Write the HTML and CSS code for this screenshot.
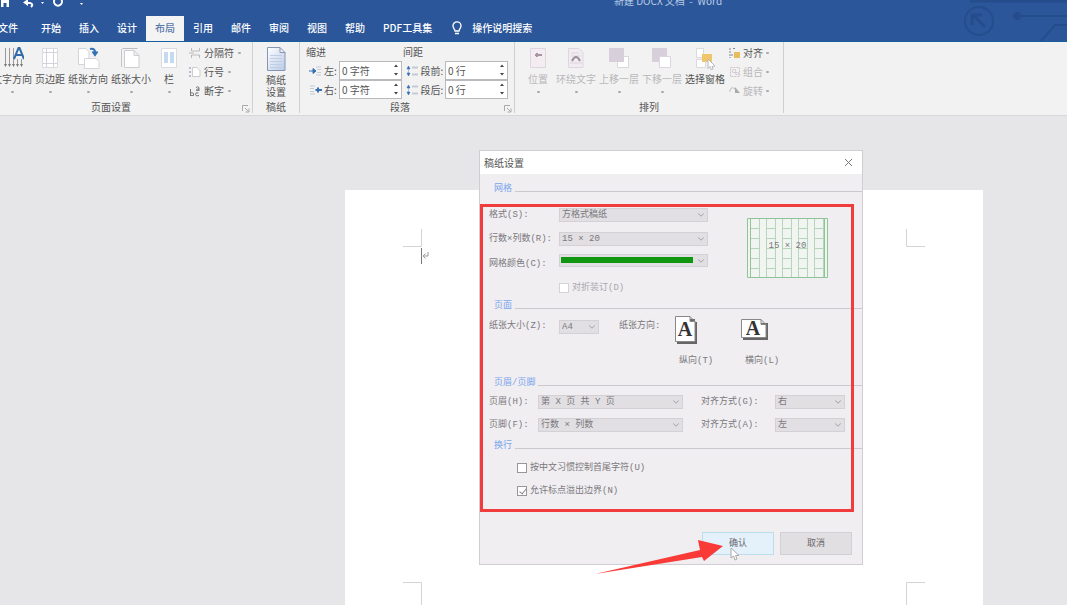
FILE: index.html
```html
<!DOCTYPE html>
<html lang="zh-CN">
<head>
<meta charset="utf-8">
<title>新建 DOCX 文档 - Word</title>
<link rel="stylesheet" href="styles.css">
</head>
<body>
<svg class="defs" aria-hidden="true">
  <symbol id="chev" viewBox="0 0 8 6"><path d="M1.200 1.500 4 4.200 6.800 1.500" fill="none" stroke="#a3a1a5"/></symbol>
  <symbol id="launch" viewBox="0 0 8 8"><path d="M.5 6V.5H6M3 3l3.500 3.500M7 3.500V7H3.500" fill="none" stroke="#aaa"/></symbol>
  <symbol id="spin" viewBox="0 0 6 18"><path d="M1 6 3 3.500 5 6zM1 12 3 14.500 5 12z" fill="#444"/></symbol>
  <symbol id="lines" viewBox="0 0 13 12"><path d="M2.500 2v8" stroke="#a9c2e2"/><path d="M1 4 2.500 1 4 4zM1 8l1.500 3L4 8z" fill="#3c6fb3" stroke="#3c6fb3" stroke-width=".6"/><path d="M6 2.500h6M6 9.500h6" stroke="#c3cad6" stroke-width="2"/></symbol>
</svg>

<header class="top">
  <svg class="circuit" viewBox="0 0 110 41" aria-hidden="true"><g fill="none" stroke="#254c8b"><path d="M13 1h97" stroke-width="3"/><circle cx="22" cy="21" r="14" stroke-width="2"/><path d="M28 27 16 15M15 25V15h10" stroke-width="3"/><path d="M64 16h46M84 41l14-16h12" stroke-width="2"/></g><circle cx="60" cy="16" r="4" fill="#254c8b"/></svg>
  <div class="titlebar">
    <svg class="quick" viewBox="0 0 90 15" aria-hidden="true"><path d="M1 0h8v7H1z" fill="#fff"/><path d="M3.500 3h3v4h-3z" fill="#2b579a"/><path d="M25 3h5q4 1 1 4" fill="none" stroke="#fff" stroke-width="2"/><path d="M28-1v7l-5-3.500z" fill="#fff"/><path d="M41 2h3l-1.500 2zM80 3h3l-1.500 2z" fill="#fff"/><path d="M55-1a4 4 0 1 0 6 0" fill="none" stroke="#fff" stroke-width="2"/></svg>
    <span class="doc-name">新建 DOCX 文档 &nbsp;-&nbsp; Word</span>
  </div>
  <nav class="tabs">
    <button class="tab file">文件</button><button class="tab">开始</button><button class="tab">插入</button><button class="tab">设计</button><button class="tab active">布局</button><button class="tab">引用</button><button class="tab">邮件</button><button class="tab">审阅</button><button class="tab">视图</button><button class="tab">帮助</button><button class="tab">PDF工具集</button>
    <button class="tab tell"><svg width="12" height="14" viewBox="0 0 12 14"><path d="M4 10C4 8 2 7.500 2 4.800a4 4 0 0 1 8 0C10 7.500 8 8 8 10zM4 12.500h4" fill="none" stroke="#fff" stroke-width="1.300"/></svg>操作说明搜索</button>
  </nav>
</header>

<section class="ribbon">
  <div class="group setup">
    <div class="tools">
      <button class="big"><svg viewBox="0 0 24 24"><path d="M5.500 2v17M9.500 2v17M13.500 2v17M17.500 13v6M21.500 13v6" stroke="#999"/><path d="m4 18 1.500 3L7 18zm4 0 1.500 3 1.500-3zm4 0 1.500 3 1.500-3zm4 0 1.500 3 1.500-3zm4 0 1.500 3 1.500-3z" fill="#777"/><path d="M14 13 18.500 2h1L24 13M15.500 9h7" fill="none" stroke="#336ba9" stroke-width="2"/></svg>文字方向<i class="dot"></i></button>
      <button class="big"><svg viewBox="0 0 24 24"><path d="M4.500 2.500h15v19h-15z" fill="#fff" stroke="#dadae0"/><path d="M8.500 3v18M15.500 3v18M5 6.500h14M5 17.500h14" stroke="#d0d3dc"/></svg>页边距<i class="dot"></i></button>
      <button class="big"><svg viewBox="0 0 24 24"><path d="M2.500 2.500H10l3 3v13H2.500z" fill="#fff" stroke="#d4d4da"/><path d="M8.500 12.500H20l3 3v7H8.500z" fill="#fff" stroke="#d4d4da"/><path d="M14 3q6-1 5 5M16.500 5.500 19 9l2.500-3.500" fill="none" stroke="#3670b5" stroke-width="2"/></svg>纸张方向<i class="dot"></i></button>
      <button class="big"><svg viewBox="0 0 24 24"><path d="M3.500 2.500h15" stroke="#bbbbc4"/><path d="M2.500 3v18" stroke="#c5c5cc"/><path d="M5.500 4.500H15l5 5v12H5.500zM15 4.500v5h5" fill="#fff" stroke="#ccccd2"/></svg>纸张大小<i class="dot"></i></button>
      <button class="big"><svg viewBox="0 0 24 24"><path d="M4.500 2.500h15v19h-15z" fill="#fff" stroke="#dadae0"/><path d="M7 6h4v11H7zM13 6h4v11h-4z" fill="#c4daf0"/></svg>栏<i class="dot"></i></button>
      <div class="stack">
        <button class="small"><svg viewBox="0 0 12 12"><path d="M2.500 1v3h8V1M2.500 11V8h8v3M0 6h5" fill="none" stroke="#bbb"/></svg>分隔符<i class="dot"></i></button>
        <button class="small"><svg viewBox="0 0 12 12"><path d="M1 1v10" stroke="#7a8ca6" stroke-dasharray="2 2"/><path d="M3.500 1.500H8l3 3v6H3.500z" fill="#fff" stroke="#ccc"/></svg>行号<i class="dot"></i></button>
        <button class="small"><svg viewBox="0 0 12 12"><path d="M1.500 4v7M1.500 8q4-1 3 2.500h-3M9.500 8Q6 7 6.500 9.500 7 12 10 10.500M7 2.500q2-1.500 3 0V6M10 4Q7 3.500 7.500 5.500 9 6 10 5" fill="none" stroke="#777"/></svg>断字<i class="dot"></i></button>
      </div>
    </div>
    <div class="caption">页面设置</div><svg class="launcher"><use href="#launch"/></svg>
  </div>
  <div class="group draft">
    <div class="tools"><button class="big two"><svg viewBox="0 0 24 26"><defs><linearGradient id="pg" x2="1" y2="1"><stop stop-color="#fff"/><stop offset="1" stop-color="#b9c9e5"/></linearGradient></defs><path d="M3.500 1.500H16l5 5v18H3.500zM16 1.500v5h5" fill="url(#pg)" stroke="#8796b5"/><path d="M6 9.500h12M6 12.500h12M6 15.500h12M6 18.500h12M6 21.500h12" stroke="#bfcee7"/></svg>稿纸<br>设置</button></div>
    <div class="caption">稿纸</div>
  </div>
  <div class="group para">
    <div class="spacing">
      <span class="head">缩进</span><span class="head">间距</span>
      <label class="field"><svg viewBox="0 0 13 12"><path d="M0 6h5M4 3.500 7 6 4 8.500z" fill="#3670b5" stroke="#3670b5"/><path d="M7 2h5M8 4.500h4M8 7.500h4M7 10h5" stroke="#c3cad6"/></svg><span>左:</span><span class="num"><input value="0 字符"><svg><use href="#spin"/></svg></span></label>
      <label class="field"><svg viewBox="0 0 13 12"><use href="#lines"/></svg><span>段前:</span><span class="num"><input value="0 行"><svg><use href="#spin"/></svg></span></label>
      <label class="field"><svg viewBox="0 0 13 12"><path d="M1 2h5M1 4.500h4M1 7.500h4M1 10h5" stroke="#c3cad6"/><path d="M13 6H9M9 3.500v5M6.500 6h5" fill="none" stroke="#3670b5" stroke-width="2"/></svg><span>右:</span><span class="num"><input value="0 字符"><svg><use href="#spin"/></svg></span></label>
      <label class="field"><svg viewBox="0 0 13 12"><use href="#lines"/></svg><span>段后:</span><span class="num"><input value="0 行"><svg><use href="#spin"/></svg></span></label>
    </div>
    <div class="caption">段落</div><svg class="launcher"><use href="#launch"/></svg>
  </div>
  <div class="group arrange">
    <div class="tools">
      <button class="big" disabled><svg viewBox="0 0 24 24"><path d="M4.500 2.500h15v19h-15z" fill="#f3ecf1" stroke="#dfd6dd"/><path d="M9 9h7M11 7v4" stroke="#a793a2" stroke-width="2"/></svg>位置<i class="dot"></i></button>
      <button class="big" disabled><svg viewBox="0 0 24 24"><path d="M4.500 2.500H15l4 4v15H4.500z" fill="#f1ecf1" stroke="#dfd6dd"/><path d="M7 10h10M7 7h8M6 17h12" stroke="#ded4dd"/><path d="M8 15q4-8 8 0" fill="none" stroke="#9a8e9a" stroke-width="2"/></svg>环绕文字<i class="dot"></i></button>
      <button class="big" disabled><svg viewBox="0 0 24 24"><path d="M10.500 10.500h11v11h-11z" fill="#fff" stroke="#ddd5dd"/><path d="M2 2h15v14H2z" fill="#d7cfd9"/></svg>上移一层<i class="dot"></i></button>
      <button class="big" disabled><svg viewBox="0 0 24 24"><path d="M2 2h15v14H2z" fill="#d7cfd9"/><path d="M9.500 10.500h11v11h-11z" fill="#fff" stroke="#ddd5dd"/></svg>下移一层<i class="dot"></i></button>
      <button class="big"><svg viewBox="0 0 24 24"><path d="M3.500 2.500h7v9h-7zM3.500 13.500h9v8h-9z" fill="#fff" stroke="#d9d9df"/><path d="M9 8h10v8H9z" fill="#efc66a"/><path d="m15 13 7 7-3 .5 1 2.500-2 .5-1-3-2 2z" fill="#fff" stroke="#b8b8be"/></svg>选择窗格</button>
      <div class="stack">
        <button class="small"><svg viewBox="0 0 12 12"><path d="M1 1v10M4 1.500h3M4 8H1" stroke="#7b8797" stroke-dasharray="2 1"/><path d="M5 5h6v6H5z" fill="#e8bd5e"/></svg>对齐<i class="dot"></i></button>
        <button class="small" disabled><svg viewBox="0 0 12 12"><path d="M1.500 1.500h9v9h-9zM3.500 3.500h3v3h-3zM6.500 6.500h3v2h-3z" fill="none" stroke="#cdc4cb" stroke-dasharray="2 1"/></svg>组合<i class="dot"></i></button>
        <button class="small" disabled><svg viewBox="0 0 12 12"><path d="M1 7V5q2-4 5-1" fill="none" stroke="#bbb"/><path d="M6 2v6h5z" fill="#aaa"/></svg>旋转<i class="dot"></i></button>
      </div>
    </div>
    <div class="caption">排列</div>
  </div>
</section>

<main class="workspace">
  <article class="sheet">
    <svg class="crop" viewBox="0 0 19 36"><path d="M18.500 0v17.500H0" fill="none" stroke="#d4d4d6"/><path d="M18.500 19v16" stroke="#777"/></svg>
    <svg class="crop right" viewBox="0 0 19 36"><path d="M.5 0v17.500H19" fill="none" stroke="#d4d4d6"/></svg>
    <svg class="crop low" viewBox="0 0 19 36"><path d="M0 .5h18.500V36" fill="none" stroke="#d4d4d6"/></svg>
    <svg class="crop right low" viewBox="0 0 19 36"><path d="M19 .5H.5V36" fill="none" stroke="#d4d4d6"/></svg>
    <svg class="mark" viewBox="0 0 7 8"><path d="M6 1v4H1M3.500 2.500 1 5l2.500 2.500" fill="none" stroke="#999"/></svg>
  </article>
</main>

<section class="dialog" role="dialog" aria-labelledby="dlg-title">
  <div class="dialog-title"><h1 id="dlg-title">稿纸设置</h1><button class="close" aria-label="关闭"><svg viewBox="0 0 9 9"><path d="m1 1 7 7M8 1 1 8" stroke="#777"/></svg></button></div>
  <form>
    <h2>网格</h2>
    <div class="grid-part">
      <div class="grid-fields">
        <label for="fmt">格式(S):</label><span class="sel"><select id="fmt"><option>方格式稿纸</option></select><svg><use href="#chev"/></svg></span>
        <label for="rc">行数×列数(R):</label><span class="sel"><select id="rc"><option>15 × 20</option></select><svg><use href="#chev"/></svg></span>
        <label for="col">网格颜色(C):</label><span class="sel color"><select id="col"><option></option></select><svg><use href="#chev"/></svg></span>
        <label class="check faint"><input type="checkbox" disabled><span>对折装订(D)</span></label>
      </div>
      <div class="preview">
        <svg viewBox="0 0 81 60"><defs><pattern id="cells" width="16" height="10" patternUnits="userSpaceOnUse" x="3"><path d="M.5 0v10M9.500 0v10M.5 .5h9" fill="none" stroke="#b8d4bb"/></pattern></defs><path d="M.5.5h80v59H.5z" fill="#f1f5f1"/><path d="M3 1h75v58H3z" fill="url(#cells)"/><path d="M.5.5h80v59H.5zM3.500 1v58M77.500 1v58" fill="none" stroke="#8fc596"/></svg>
        <span>15 × 20</span>
      </div>
    </div>
    <h2>页面</h2>
    <div class="page-part">
      <label for="size">纸张大小(Z):</label><span class="sel"><select id="size"><option>A4</option></select><svg><use href="#chev"/></svg></span>
      <span class="orient-label">纸张方向:</span>
      <button type="button" class="orient"><svg viewBox="0 0 28 28"><path d="M2 3h20v25H2z" fill="#666"/><path d="M20 0h3v6h-3z" fill="#f0eef1"/><path d="M.5.5H15l5 5v20H.5zM15 .5v5h5" fill="#fff" stroke="#888"/><text x="10" y="20">A</text></svg>纵向(T)</button>
      <button type="button" class="orient"><svg viewBox="0 0 28 28"><path d="M2 7h25v17H2z" fill="#666"/><path d="M.5 3.500H20l5 5v13H.5zM20 3.500v5h5" fill="#fff" stroke="#888"/><text x="12" y="19">A</text></svg>横向(L)</button>
    </div>
    <h2>页眉/页脚</h2>
    <div class="header-part">
      <label for="hd">页眉(H):</label><span class="sel"><select id="hd"><option>第 X 页 共 Y 页</option></select><svg><use href="#chev"/></svg></span>
      <label class="second" for="ag">对齐方式(G):</label><span class="sel"><select id="ag"><option>右</option></select><svg><use href="#chev"/></svg></span>
      <label for="ft">页脚(F):</label><span class="sel"><select id="ft"><option>行数 × 列数</option></select><svg><use href="#chev"/></svg></span>
      <label class="second" for="aa">对齐方式(A):</label><span class="sel"><select id="aa"><option>左</option></select><svg><use href="#chev"/></svg></span>
    </div>
    <h2>换行</h2>
    <div class="wrap-part">
      <label class="check"><input type="checkbox"><span>按中文习惯控制首尾字符(U)</span></label>
      <label class="check"><input type="checkbox" checked><span>允许标点溢出边界(N)</span></label>
    </div>
    <div class="actions"><button type="button" class="ok">确认</button><button type="button">取消</button></div>
  </form>
  <div class="highlight"></div>
  <svg class="pointer" viewBox="0 0 10 14"><path d="M1 1v10l2.500-2L5 13l2-1-1.500-3.500H9z" fill="#fff" stroke="#aaa"/></svg>
  <svg class="arrow" viewBox="0 0 130 36"><path d="M0 35 105 11 103 1 128 7 109 22 107 18z" fill="#f93a37"/></svg>
</section>
</body>
</html>
```

FILE: styles.css
```css
* { box-sizing: border-box; }
body {
  margin: 0;
  min-height: 100vh;
  display: flex;
  flex-direction: column;
  position: relative;
  overflow: hidden;
  background: #e6e6e8;
  color: #555;
  font: 10px/12px "Noto Sans CJK SC", sans-serif;
}
button, input, select { font: inherit; color: inherit; margin: 0; }
button { border: 0; background: none; padding: 0; white-space: nowrap; }
svg { display: block; flex: none; }
.defs { position: absolute; width: 0; height: 0; }

.top { position: relative; background: #2b579a; border-bottom: 1px solid #17609f; color: #fff; }
.circuit { position: absolute; right: 0; top: 0; width: 110px; height: 41px; }
.titlebar { height: 16px; display: flex; align-items: flex-start; position: relative; }
.quick { width: 90px; height: 15px; }
.doc-name { position: absolute; left: 614px; top: -5px; color: #b9cae4; }
.tabs { display: flex; position: relative; height: 25px; margin-left: -11px; }
.tab { padding: 0 9px 2px; font-weight: 500; }
.tab.file { margin-right: 5px; }
.tab.active { background: #f4f4f5; color: #5878a8; }
.tab.tell { display: flex; align-items: center; gap: 9px; padding-left: 10px; }

.ribbon { display: flex; height: 74px; background: #f2f2f2; border-bottom: 1px solid #d8d8da; }
.group { position: relative; display: flex; flex-direction: column; justify-content: space-between; padding: 1px 0 0; border-right: 1px solid #d0d0d2; margin-bottom: 2px; }
.tools { display: flex; gap: 3px; }
.caption { text-align: center; }
.launcher { position: absolute; right: 2px; bottom: 0; width: 8px; height: 8px; }
.setup { width: 253px; }
.setup .tools { margin-left: -8px; }
.setup .caption { padding-right: 30px; }
.draft { width: 47px; }
.draft .tools { justify-content: center; }
.para { width: 215px; }
.para .caption { padding-right: 14px; }
.arrange { width: 269px; padding-left: 8px; }
.arrange .caption { padding-right: 8px; }
.big { display: flex; flex-direction: column; align-items: center; min-width: 30px; height: 54px; line-height: 14px; }
.big svg { width: 24px; height: 24px; margin: 3px 0 2px; }
.big.two { line-height: 12px; }
.big.two svg { height: 26px; }
.dot { width: 3px; height: 2px; background: #aaa; border-radius: 1px; }
.big .dot { margin-top: 5px; }
button:disabled { color: #b9b7ba; }
.stack { display: flex; flex-direction: column; padding-left: 2px; }
.small { display: flex; align-items: center; gap: 3px; height: 19px; }
.small svg { width: 12px; height: 12px; }
.arrange .stack { padding-left: 1px; }
.arrange .small { gap: 2px; }
.small .dot { margin-left: 1px; }
.spacing { display: grid; grid-template-columns: 93px 102px; column-gap: 4px; grid-template-rows: 18px 19px 19px; align-items: center; padding-left: 9px; }
.head { margin-left: -3px; }
.field { display: flex; align-items: center; justify-content: space-between; }
.field > svg { width: 13px; height: 12px; }
.num { position: relative; width: 63px; height: 19px; }
.num input { width: 100%; height: 100%; padding: 0 2px; border: 1px solid #b9b9be; background: #fff; }
.num svg { position: absolute; right: 3px; top: 0; width: 6px; height: 18px; }

.workspace { flex: 1; display: flex; padding: 74px 84px 0 345px; }
.sheet { flex: 1; position: relative; background: #fff; }
.crop { position: absolute; left: 58px; top: 39px; width: 19px; height: 36px; }
.crop.right { left: auto; right: 58px; }
.crop.low { top: 392px; }
.mark { position: absolute; left: 77px; top: 61px; width: 7px; height: 8px; }

.dialog { position: absolute; left: 479px; top: 150px; width: 384px; border: 1px solid #d0ced2; background: #f0eef1; color: #7b787d; font: 9px/12px "Liberation Mono", "Noto Sans CJK SC", monospace; }
.dialog-title { display: flex; align-items: center; justify-content: space-between; height: 23px; padding: 0 9px 0 4px; background: #fff; }
h1 { margin: 0; color: #555; font: 10px/12px "Noto Sans CJK SC", sans-serif; }
.close svg { width: 9px; height: 9px; }
h2 { display: flex; align-items: center; gap: 3px; margin: 0; padding-left: 14px; height: 14px; color: #7ba5ed; font: 9px/14px "Liberation Mono", "Noto Sans CJK SC", monospace; }
h2::after { content: ""; flex: 1; height: 1px; margin-top: 4px; background: #cbc9cd; }
form { padding-top: 8px; }
.sel { position: relative; display: flex; height: 14px; }
.sel select { appearance: none; width: 100%; height: 100%; padding: 0 2px; border: 1px solid #d3d1d5; border-radius: 0; background: #e1dfe2; line-height: 12px; }
.sel svg { position: absolute; right: 3px; top: 4px; width: 8px; height: 6px; }
.sel.color { height: 13px; margin-bottom: 6px; }
.sel.color select { background: linear-gradient(#109610, #109610) 1px 2px / 132px 6px no-repeat #e1dfe2; }
.grid-part { display: flex; justify-content: space-between; padding: 6px 34px 0 9px; }
.grid-fields { display: grid; grid-template-columns: 70px 149px; grid-template-rows: 25px 24px 25px 23px; align-items: center; }
.grid-fields .check { grid-column: 2; }
.preview { position: relative; width: 81px; height: 60px; margin-top: 16px; }
.preview svg { width: 81px; height: 60px; }
.preview span { position: absolute; left: 0; right: 0; top: 22px; text-align: center; }
.check { display: flex; align-items: center; gap: 3px; }
.check.faint { color: #aaa7ac; }
.check input { appearance: none; width: 10px; height: 10px; border: 1px solid #98969a; background: #fff; }
.check.faint input { border-color: #d5d3d7; }
.check input:checked::after { content: ""; display: block; width: 3px; height: 6px; margin: 0 0 0 3px; border: solid #888; border-width: 0 1px 1px 0; transform: rotate(40deg); }
.page-part { display: flex; align-items: flex-start; height: 63px; padding: 0 0 0 9px; line-height: 26px; }
.page-part > label { width: 70px; }
.page-part .sel { width: 40px; margin-top: 7px; }
.orient-label { margin-left: 20px; width: 56px; }
.orient { display: flex; flex-direction: column; align-items: flex-start; gap: 11px; width: 66px; padding: 3px 0 0 4px; line-height: 12px; }
.orient svg { width: 28px; height: 28px; margin-left: -4px; }
.orient text { font: bold 20px "Liberation Serif", serif; fill: #333; text-anchor: middle; }
.header-part { display: grid; grid-template-columns: 49px 145px 92px 70px; grid-auto-rows: 23px; align-items: center; height: 49px; padding: 0 0 0 9px; }
.header-part .second { padding-left: 18px; }
.wrap-part { display: flex; flex-direction: column; gap: 11px; padding: 9px 37px 0; }
.actions { display: flex; justify-content: flex-end; gap: 6px; padding: 35px 10px 9px; }
.actions button { width: 72px; height: 23px; border: 1px solid #d2d0d4; background: #e1dfe2; color: #68656a; }
.actions .ok { border-color: #bcddec; background: #e4f0fa; }
.highlight { position: absolute; left: 0; top: 53px; width: 374px; height: 308px; border: 3px solid #f03c3d; }
.pointer { position: absolute; left: 250px; top: 396px; width: 10px; height: 14px; }
.arrow { position: absolute; left: 115px; top: 388px; width: 130px; height: 36px; }
```
